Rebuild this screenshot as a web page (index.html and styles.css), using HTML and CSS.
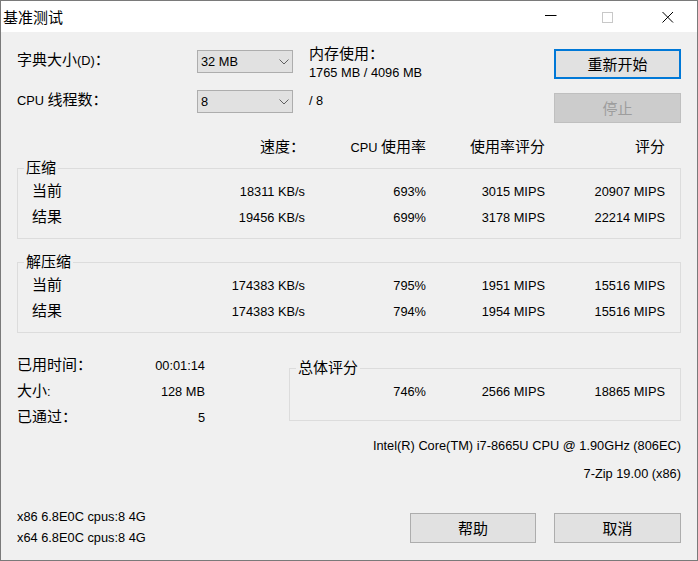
FILE: index.html
```html
<!DOCTYPE html>
<html lang="zh-CN">
<head>
<meta charset="utf-8">
<title>基准测试</title>
<link rel="stylesheet" href="styles.css">
</head>
<body>
<div class="window">
  <div class="titlebar">
    <div class="title"><span class="zh">基准测试</span></div>
    <div class="caption">
      <svg class="cap cap-min" width="12" height="12" viewBox="0 0 12 12"><line x1="0" y1="4.5" x2="11.5" y2="4.5" stroke="#000" stroke-width="1"/></svg>
      <svg class="cap cap-max" width="12" height="12" viewBox="0 0 12 12"><rect x="0.5" y="1.5" width="10" height="10" fill="none" stroke="#c8c8c8" stroke-width="1"/></svg>
      <svg class="cap cap-close" width="12" height="12" viewBox="0 0 12 12"><line x1="0.5" y1="1" x2="11" y2="11.5" stroke="#000" stroke-width="1"/><line x1="11" y1="1" x2="0.5" y2="11.5" stroke="#000" stroke-width="1"/></svg>
    </div>
  </div>

  <div class="content">
    <div class="top">
      <div class="col-labels">
        <div class="lbl"><span class="zh">字典大小</span>(D)<span class="zh">：</span></div>
        <div class="lbl">CPU <span class="zh">线程数：</span></div>
      </div>
      <div class="col-combos">
        <div class="combo"><span>32 MB</span><svg class="chev" width="10" height="6" viewBox="0 0 10 6"><polyline points="0.5,0.5 5,5 9.5,0.5" fill="none" stroke="#606060" stroke-width="1"/></svg></div>
        <div class="combo"><span>8</span><svg class="chev" width="10" height="6" viewBox="0 0 10 6"><polyline points="0.5,0.5 5,5 9.5,0.5" fill="none" stroke="#606060" stroke-width="1"/></svg></div>
      </div>
      <div class="col-mem">
        <div class="mem-line"><span class="zh">内存使用：</span></div>
        <div class="mem-line">1765 MB / 4096 MB</div>
        <div class="threads">/ 8</div>
      </div>
      <div class="col-btns">
        <button class="btn btn-default" type="button"><span class="zh">重新开始</span></button>
        <button class="btn btn-disabled" type="button" disabled><span class="zh">停止</span></button>
      </div>
    </div>

    <div class="hdr">
      <div></div>
      <div class="r"><span class="zh">速度：</span></div>
      <div class="r">CPU <span class="zh">使用率</span></div>
      <div class="r"><span class="zh">使用率评分</span></div>
      <div class="r"><span class="zh">评分</span></div>
    </div>

    <fieldset class="grp">
      <legend><span class="zh">压缩</span></legend>
      <div class="row">
        <div class="name"><span class="zh">当前</span></div>
        <div class="r">18311 KB/s</div>
        <div class="r">693%</div>
        <div class="r">3015 MIPS</div>
        <div class="r">20907 MIPS</div>
      </div>
      <div class="row">
        <div class="name"><span class="zh">结果</span></div>
        <div class="r">19456 KB/s</div>
        <div class="r">699%</div>
        <div class="r">3178 MIPS</div>
        <div class="r">22214 MIPS</div>
      </div>
    </fieldset>

    <fieldset class="grp grp-second">
      <legend><span class="zh">解压缩</span></legend>
      <div class="row">
        <div class="name"><span class="zh">当前</span></div>
        <div class="r">174383 KB/s</div>
        <div class="r">795%</div>
        <div class="r">1951 MIPS</div>
        <div class="r">15516 MIPS</div>
      </div>
      <div class="row">
        <div class="name"><span class="zh">结果</span></div>
        <div class="r">174383 KB/s</div>
        <div class="r">794%</div>
        <div class="r">1954 MIPS</div>
        <div class="r">15516 MIPS</div>
      </div>
    </fieldset>

    <div class="bottom">
      <div class="stats">
        <div class="stat"><span class="k"><span class="zh">已用时间：</span></span><span class="v">00:01:14</span></div>
        <div class="stat"><span class="k"><span class="zh">大小</span>:</span><span class="v">128 MB</span></div>
        <div class="stat"><span class="k"><span class="zh">已通过：</span></span><span class="v">5</span></div>
      </div>
      <div class="right">
        <fieldset class="grp total">
          <legend><span class="zh">总体评分</span></legend>
          <div class="row3">
            <div class="r">746%</div>
            <div class="r">2566 MIPS</div>
            <div class="r">18865 MIPS</div>
          </div>
        </fieldset>
        <div class="cpuinfo">Intel(R) Core(TM) i7-8665U CPU @ 1.90GHz (806EC)</div>
        <div class="cpuinfo cpuinfo-last">7-Zip 19.00 (x86)</div>
      </div>
    </div>

    <div class="footer">
      <div class="arch">
        <div>x86 6.8E0C cpus:8 4G</div>
        <div>x64 6.8E0C cpus:8 4G</div>
      </div>
      <button class="btn btn-help" type="button"><span class="zh">帮助</span></button>
      <button class="btn btn-cancel" type="button"><span class="zh">取消</span></button>
    </div>
  </div>
</div>
</body>
</html>
```

FILE: styles.css
```css
* {
  box-sizing: border-box;
}

html,
body {
  margin: 0;
  padding: 0;
  background: #f0f0f0;
}

body {
  font-family: "Liberation Sans", "Noto Sans CJK SC", sans-serif;
  font-size: 12.8px;
  color: #000;
}

.zh {
  font-family: "Noto Sans CJK SC", "Liberation Sans", sans-serif;
  font-size: 15px;
  line-height: 1;
}

.window {
  width: 698px;
  height: 561px;
  border: 1px solid #7a7a7a;
  background: #f0f0f0;
  overflow: hidden;
}

/* title bar */
.titlebar {
  height: 31px;
  background: #fff;
  display: flex;
}

.title {
  flex: 1;
  padding: 4px 0 0 2px;
  line-height: 27px;
}

.caption {
  display: flex;
  align-items: flex-start;
  padding-top: 10px;
  padding-right: 23px;
}

.cap {
  display: block;
}

.cap-max {
  margin-left: 45px;
}

.cap-close {
  margin-left: 48px;
}

/* content */
.content {
  padding: 0 16px;
}

.top {
  display: flex;
}

.col-labels {
  width: 180px;
  padding-top: 19px;
  display: flex;
  flex-direction: column;
  gap: 20px;
}

.lbl {
  line-height: 20px;
  white-space: nowrap;
}

.col-combos {
  width: 96px;
  padding-top: 18px;
  display: flex;
  flex-direction: column;
  gap: 17px;
}

.combo {
  height: 23px;
  border: 1px solid #adadad;
  background: #e1e1e1;
  display: flex;
  align-items: center;
  justify-content: space-between;
  padding: 0 3px 0 3px;
  line-height: 21px;
}

.chev {
  display: block;
}

.col-mem {
  width: 261px;
  padding-left: 16px;
  padding-top: 13px;
}

.mem-line {
  line-height: 18px;
}

.threads {
  margin-top: 10px;
  line-height: 18px;
}

.col-btns {
  width: 127px;
  padding-top: 17px;
  display: flex;
  flex-direction: column;
  gap: 14px;
}

.btn {
  height: 30px;
  margin: 0;
  padding: 0 0 2px 0;
  border: 1px solid #adadad;
  background: #e1e1e1;
  color: #000;
  font: inherit;
  display: flex;
  align-items: center;
  justify-content: center;
}

.btn-default {
  border: 2px solid #0078d7;
}

.btn-disabled {
  background: #cccccc;
  border-color: #bfbfbf;
  color: #9d9d9d;
}

/* table */
.r {
  text-align: right;
  white-space: nowrap;
}

.hdr {
  margin-top: 15px;
  line-height: 20px;
  display: grid;
  grid-template-columns: 183px 105px 121px 119px 120px;
}

.grp {
  margin: 0;
  padding: 1px 0 7px 0;
  border: 1px solid #dcdcdc;
  min-width: 0;
}

.grp legend {
  margin-left: 6px;
  padding: 0 2px;
  line-height: 20px;
}

.grp legend .zh {
  vertical-align: -1px;
}

.grp-second {
  margin-top: 13px;
}

.row {
  display: grid;
  grid-template-columns: 182px 105px 121px 119px 120px;
  line-height: 26px;
}

.name {
  padding-left: 14px;
}

/* bottom */
.bottom {
  display: flex;
  margin-top: 20px;
}

.stats {
  width: 188px;
  margin-right: 84px;
}

.stat {
  display: flex;
  justify-content: space-between;
  line-height: 26px;
}

.right {
  width: 392px;
}

.total {
  margin-top: 5px;
  padding: 1px 0 15px 0;
}

.row3 {
  display: grid;
  grid-template-columns: 136px 119px 120px;
  line-height: 26px;
}

.cpuinfo {
  margin-top: 11px;
  line-height: 28px;
  text-align: right;
  white-space: nowrap;
}

.cpuinfo-last {
  margin-top: 0;
}

.footer {
  display: flex;
  align-items: flex-start;
  margin-top: 18px;
}

.arch {
  flex: 1;
  line-height: 21px;
}

.btn-help {
  width: 126px;
  margin-top: 7px;
  margin-right: 18px;
}

.btn-cancel {
  width: 127px;
  margin-top: 7px;
}
```
